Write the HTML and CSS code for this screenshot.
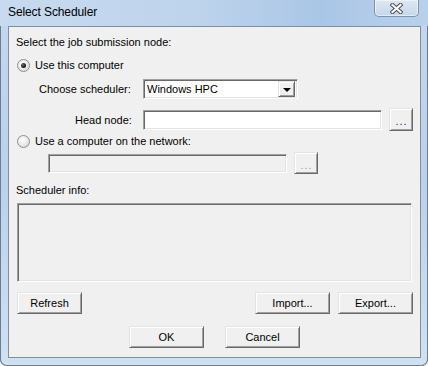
FILE: index.html
```html
<!DOCTYPE html>
<html lang="en">
<head>
  <meta charset="UTF-8" />
  <title>Select Scheduler</title>
  <link rel="stylesheet" href="styles.css">
</head>
<body>
  <div class="window">
    <div class="titlebar">
      <span class="title">Select Scheduler</span>
      <button class="close" title="Close">
        <svg width="13" height="11" viewBox="0 0 13 11">
          <path d="M2.5 2 L10.5 9 M10.5 2 L2.5 9" stroke="#4a4f57" stroke-width="4.2" stroke-linecap="square" fill="none" />
          <path d="M2.5 2 L10.5 9 M10.5 2 L2.5 9" stroke="#fff" stroke-width="2.2" stroke-linecap="square" fill="none" />
        </svg>
      </button>
    </div>

    <div class="panel">
      <div class="text-row heading">Select the job submission node:</div>

      <div class="radio-row first">
        <span class="radio checked"></span>
        <span class="radio-label">Use this computer</span>
      </div>

      <div class="field-row scheduler">
        <span class="label">Choose scheduler:</span>
        <div class="combo">
          <span class="combo-text">Windows HPC</span>
          <span class="combo-btn"><span class="arrow"></span></span>
        </div>
      </div>

      <div class="field-row head">
        <span class="label">Head node:</span>
        <div class="textbox"></div>
        <button class="btn browse">...</button>
      </div>

      <div class="radio-row second">
        <span class="radio"></span>
        <span class="radio-label">Use a computer on the network:</span>
      </div>

      <div class="field-row network">
        <div class="textbox disabled"></div>
        <button class="btn browse disabled">...</button>
      </div>

      <div class="text-row info-label">Scheduler info:</div>
      <div class="info-box"></div>

      <div class="actions">
        <button class="btn refresh">Refresh</button>
        <div class="actions-right">
          <button class="btn">Import...</button>
          <button class="btn">Export...</button>
        </div>
      </div>

      <div class="dialog-buttons">
        <button class="btn">OK</button>
        <button class="btn">Cancel</button>
      </div>
    </div>
  </div>
</body>
</html>
```

FILE: styles.css
```css
body {
  margin: 0;
  font-family: "Liberation Sans", Arial, sans-serif;
  font-size: 11px;
  color: #000;
  background: #fff;
}
.window {
  width: 428px;
  height: 366px;
  box-sizing: border-box;
  overflow: hidden;
  border-radius: 0 0 7px 7px;
  background: linear-gradient(180deg, #c4d8ee 0%, #bad1ea 50%, #cfe2f3 100%);
  box-shadow: inset 1px 0 #6f7c8b, inset -1px 0 #6f7c8b, inset 0 -1px #6f7c8b;
}
.titlebar {
  display: flex;
  justify-content: space-between;
  align-items: flex-start;
  height: 26px;
  padding: 0 9px 0 8px;
  background: linear-gradient(90deg, #c7daef 0%, #bed4ec 45%, #aac6e6 75%, #b9d0ea 100%);
}
.title {
  padding-top: 5px;
  line-height: 15px;
  font-size: 12px;
  letter-spacing: -0.1px;
  color: #000;
}
.close {
  width: 45px;
  height: 17px;
  padding: 0;
  box-sizing: border-box;
  display: flex;
  align-items: center;
  justify-content: center;
  border: 1px solid #7f93ad;
  border-top: none;
  border-radius: 0 0 5px 5px;
  background: linear-gradient(180deg, #dde8f4, #c6d7eb);
  box-shadow: inset 0 0 0 1px rgba(255, 255, 255, 0.5);
}
.panel {
  margin-left: 8px;
  width: 413px;
  height: 332px;
  box-sizing: border-box;
  padding: 0 7px;
  border: 1px solid #838e9a;
  background: #f0f0f0;
}
.text-row {
  height: 14px;
  line-height: 14px;
}
.heading {
  margin-top: 8px;
}
.radio-row {
  display: flex;
  align-items: center;
  height: 16px;
  padding-left: 1px;
}
.radio-row.first {
  margin-top: 8px;
}
.radio-row.second {
  margin-top: 2px;
}
.radio {
  width: 13px;
  height: 13px;
  box-sizing: border-box;
  border-radius: 50%;
  border: 1px solid #8c8e90;
  background: radial-gradient(circle at 40% 35%, #fff 0, #ececec 45%, #d2d2d2 100%);
  display: flex;
  align-items: center;
  justify-content: center;
}
.radio.checked::after {
  content: "";
  width: 5px;
  height: 5px;
  border-radius: 50%;
  background: radial-gradient(circle at 35% 35%, #6b6b6b, #111 70%);
}
.radio-label {
  margin-left: 5px;
}
.field-row {
  display: flex;
  align-items: center;
}
.scheduler {
  margin-top: 6px;
  height: 20px;
  padding-left: 23px;
}
.scheduler .label {
  width: 104px;
}
.head {
  margin-top: 9px;
  height: 23px;
  padding-left: 59px;
}
.head .label {
  width: 68px;
}
.network {
  margin-top: 3px;
  height: 22px;
  padding-left: 32px;
}
.textbox,
.combo,
.info-box {
  box-sizing: border-box;
  background: #fff;
  border: 1px solid;
  border-color: #a0a0a0 #fff #fff #a0a0a0;
  box-shadow: inset 1px 1px #696969, inset -1px -1px #e3e3e3;
}
.textbox {
  width: 239px;
  height: 20px;
}
.textbox.disabled {
  height: 19px;
  background: #f0f0f0;
}
.combo {
  width: 155px;
  height: 20px;
  display: flex;
  align-items: center;
  justify-content: space-between;
  padding: 2px;
}
.combo-text {
  padding-left: 1px;
}
.combo-btn {
  width: 17px;
  height: 16px;
  box-sizing: border-box;
  display: flex;
  align-items: center;
  justify-content: center;
  background: #f0f0f0;
  border: 1px solid;
  border-color: #e3e3e3 #696969 #696969 #e3e3e3;
  box-shadow: inset 1px 1px #fff, inset -1px -1px #a0a0a0;
}
.arrow {
  width: 0;
  height: 0;
  border-left: 4px solid transparent;
  border-right: 4px solid transparent;
  border-top: 4px solid #000;
  margin-top: 1px;
}
.btn {
  box-sizing: border-box;
  width: 75px;
  height: 22px;
  padding: 0;
  font: inherit;
  color: #000;
  background: #f0f0f0;
  border: 1px solid;
  border-color: #e3e3e3 #696969 #696969 #e3e3e3;
  box-shadow: inset 1px 1px #fff, inset -1px -1px #a0a0a0;
}
.browse {
  width: 24px;
  margin-left: 7px;
  letter-spacing: 1px;
  padding: 3px 0 0 1px;
  color: #2a2a6a;
}
.head .browse {
  height: 23px;
}
.browse.disabled {
  color: #a0a0a0;
}
.info-label {
  margin-top: 9px;
}
.info-box {
  margin-top: 6px;
  margin-left: 1px;
  width: 395px;
  height: 79px;
  background: #f0f0f0;
}
.actions {
  margin-top: 10px;
  display: flex;
  justify-content: space-between;
  padding-left: 1px;
}
.refresh {
  width: 65px;
}
.actions-right {
  display: flex;
  gap: 8px;
}
.dialog-buttons {
  margin-top: 12px;
  display: flex;
  justify-content: center;
  gap: 21px;
}
```
